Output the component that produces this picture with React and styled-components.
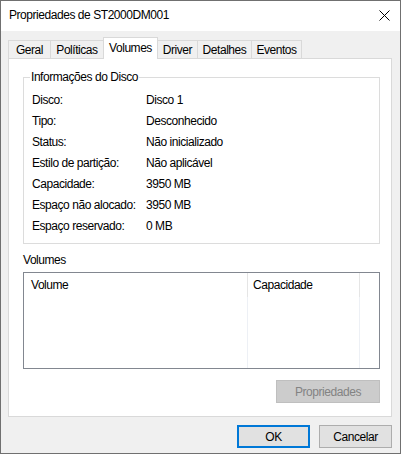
import React from 'react';
import styled, { createGlobalStyle } from 'styled-components';

const GlobalStyle = createGlobalStyle`
  html, body { margin: 0; padding: 0; background: #ffffff; }
  body {
    font-family: "Liberation Sans", Arial, sans-serif;
    font-size: 12px;
    letter-spacing: -0.45px;
    color: #000;
  }
  * { box-sizing: border-box; }
`;

const Window = styled.div`
  width: 401px;
  height: 454px;
  border: 1px solid #707070;
  background: #f0f0f0;
  display: flex;
  flex-direction: column;
`;

const TitleBar = styled.div`
  height: 30px;
  flex: none;
  background: #ffffff;
  display: flex;
  align-items: center;
  justify-content: space-between;
  padding: 0 10px 2px 8px;
`;

const Title = styled.span`
  font-size: 12px;
  line-height: 16px;
`;

const CloseIcon = styled.svg`
  width: 11px;
  height: 11px;
  display: block;
`;

const Body = styled.div`
  flex: 1;
  display: flex;
  flex-direction: column;
  padding: 6px 8px 0 7px;
`;

const TabStrip = styled.div`
  height: 21px;
  display: flex;
  align-items: flex-end;
  flex: none;
`;

const Tab = styled.div`
  position: relative;
  width: ${(p) => p.$w}px;
  margin-left: ${(p) => (p.$first ? 0 : -1)}px;
  height: ${(p) => (p.$active ? 22 : 18)}px;
  margin-bottom: ${(p) => (p.$active ? -1 : 0)}px;
  z-index: ${(p) => (p.$active ? 2 : 1)};
  border: 1px solid #d9d9d9;
  border-bottom: none;
  background: ${(p) => (p.$active ? '#ffffff' : '#f0f0f0')};
  padding-top: ${(p) => (p.$active ? 2 : 1)}px;
  line-height: 16px;
  text-align: center;
  white-space: nowrap;
`;

const Panel = styled.div`
  height: 359px;
  flex: none;
  border: 1px solid #d9d9d9;
  background: #ffffff;
  padding: 18px 11px 0 14px;
  display: flex;
  flex-direction: column;
`;

const Group = styled.div`
  position: relative;
  height: 167px;
  border: 1px solid #dcdcdc;
  padding: 12px 0 0 8px;
`;

const Legend = styled.span`
  position: absolute;
  top: -9px;
  left: 6px;
  padding: 0 1px;
  line-height: 16px;
  background: #ffffff;
`;

const InfoGrid = styled.div`
  display: grid;
  grid-template-columns: 114px 1fr;
  grid-auto-rows: 21px;
  line-height: 21px;
`;

const Cell = styled.span`
  white-space: nowrap;
`;

const SectionLabel = styled.div`
  margin-top: 8px;
  line-height: 16px;
  padding-left: 0;
`;

const ListBox = styled.div`
  margin-top: 4px;
  height: 97px;
  border: 1px solid #828790;
  display: flex;
  background: #fff;
`;

const Column = styled.div`
  width: ${(p) => (p.$w ? `${p.$w}px` : 'auto')};
  flex: ${(p) => (p.$w ? 'none' : '1')};
  border-right: ${(p) => (p.$line ? '1px solid #edf0f5' : 'none')};
  display: flex;
  flex-direction: column;
`;

const HeaderCell = styled.div`
  height: 24px;
  line-height: 24px;
  padding-left: ${(p) => p.$pad}px;
  margin-right: ${(p) => (p.$line ? -1 : 0)}px;
  border-right: ${(p) => (p.$line ? '1px solid #e5e5e5' : 'none')};
  white-space: nowrap;
`;

const PanelActions = styled.div`
  margin-top: 11px;
  display: flex;
  justify-content: flex-end;
`;

const Button = styled.button`
  font-family: inherit;
  font-size: 12px;
  letter-spacing: inherit;
  width: ${(p) => p.$w}px;
  height: 23px;
  padding: 0;
  background: ${(p) => (p.disabled ? '#cccccc' : '#e1e1e1')};
  color: ${(p) => (p.disabled ? '#838383' : '#000')};
  border: ${(p) =>
    p.$primary ? '2px solid #0078d7' : p.disabled ? '1px solid #bfbfbf' : '1px solid #adadad'};
  border-radius: 0;
  outline: none;
  line-height: 16px;
`;

const DialogActions = styled.div`
  margin-top: 8px;
  display: flex;
  justify-content: flex-end;
  gap: 9px;
`;

const tabs = [
  { label: 'Geral', w: 43 },
  { label: 'Políticas', w: 54 },
  { label: 'Volumes', w: 55, active: true },
  { label: 'Driver', w: 41 },
  { label: 'Detalhes', w: 55 },
  { label: 'Eventos', w: 51 },
];

const info = [
  ['Disco:', 'Disco 1'],
  ['Tipo:', 'Desconhecido'],
  ['Status:', 'Não inicializado'],
  ['Estilo de partição:', 'Não aplicável'],
  ['Capacidade:', '3950 MB'],
  ['Espaço não alocado:', '3950 MB'],
  ['Espaço reservado:', '0 MB'],
];

export default function App() {
  return (
    <>
      <GlobalStyle />
      <Window>
        <TitleBar>
          <Title>Propriedades de ST2000DM001</Title>
          <CloseIcon viewBox="0 0 11 11">
            <path d="M0.5 0.5 L10.5 10.5 M10.5 0.5 L0.5 10.5" stroke="#000" strokeWidth="1" fill="none" />
          </CloseIcon>
        </TitleBar>
        <Body>
          <TabStrip>
            {tabs.map((t, i) => (
              <Tab key={t.label} $w={t.w} $active={t.active} $first={i === 0}>
                {t.label}
              </Tab>
            ))}
          </TabStrip>
          <Panel>
            <Group>
              <Legend>Informações do Disco</Legend>
              <InfoGrid>
                {info.map(([k, v]) => (
                  <React.Fragment key={k}>
                    <Cell>{k}</Cell>
                    <Cell>{v}</Cell>
                  </React.Fragment>
                ))}
              </InfoGrid>
            </Group>
            <SectionLabel>Volumes</SectionLabel>
            <ListBox>
              <Column $w={224} $line>
                <HeaderCell $pad={7} $line>Volume</HeaderCell>
              </Column>
              <Column $w={112} $line>
                <HeaderCell $pad={5} $line>Capacidade</HeaderCell>
              </Column>
              <Column />
            </ListBox>
            <PanelActions>
              <Button $w={104} disabled>Propriedades</Button>
            </PanelActions>
          </Panel>
          <DialogActions>
            <Button $w={73} $primary>OK</Button>
            <Button $w={73}>Cancelar</Button>
          </DialogActions>
        </Body>
      </Window>
    </>
  );
}
